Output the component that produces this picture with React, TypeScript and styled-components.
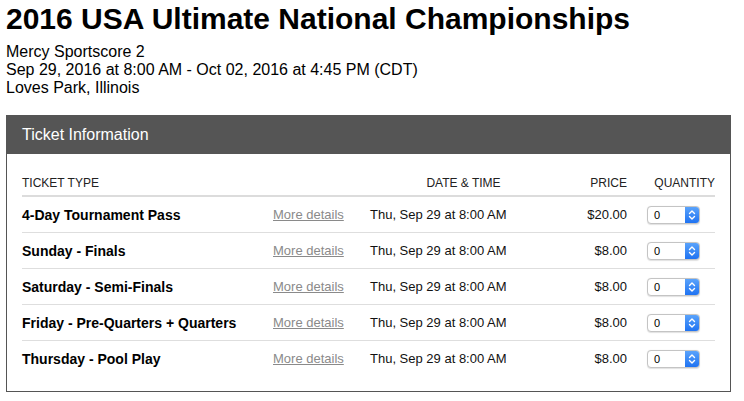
import React from "react";
import styled, { createGlobalStyle } from "styled-components";

const Global = createGlobalStyle`
  html, body { margin: 0; padding: 0; background: #fff; }
  body { font-family: "Liberation Sans", Arial, Helvetica, sans-serif; color: #000; }
`;

const Page = styled.div`
  padding: 0 13px 0 6px;
  width: 744px;
  box-sizing: border-box;
`;

const Title = styled.h1`
  margin: 1px 0 6px;
  font-size: 30px;
  line-height: 36px;
  font-weight: bold;
  color: #000;
  white-space: nowrap;
`;

const Meta = styled.div`
  font-size: 16px;
  line-height: 18px;
  color: #000;
`;

const Panel = styled.section`
  margin-top: 18px;
  border: 1px solid #555;
  width: 725px;
  box-sizing: border-box;
`;

const PanelHeader = styled.div`
  height: 38px;
  line-height: 38px;
  background: #555555;
  color: #fff;
  font-size: 16px;
  padding-left: 15px;
`;

const PanelBody = styled.div`
  padding: 22px 14px 15px 15px;
`;

const Grid = styled.div`
  display: grid;
  grid-template-columns: 251px 97px 187px 70px 88px;
`;

const HeadRow = styled.div`
  display: contents;
`;

const HeadCell = styled.div<{ $align?: "left" | "center" | "right" }>`
  font-size: 12px;
  line-height: 14px;
  color: #222;
  text-transform: uppercase;
  text-align: ${(p) => p.$align || "left"};
  padding-bottom: 5px;
  border-bottom: 2px solid #dcdcdc;
  white-space: nowrap;
`;

const Cell = styled.div<{ $align?: "left" | "center" | "right"; $last?: boolean }>`
  height: 35px;
  display: flex;
  align-items: center;
  justify-content: ${(p) =>
    p.$align === "right" ? "flex-end" : p.$align === "center" ? "center" : "flex-start"};
  border-bottom: ${(p) => (p.$last ? "none" : "1px solid #dedede")};
  font-size: 13px;
  color: #111;
  white-space: nowrap;
`;

const NameCell = styled(Cell)`
  font-size: 14px;
  font-weight: bold;
  color: #000;
`;

const QtyCell = styled(Cell)`
  padding-left: 20px;
`;

const Details = styled.a`
  color: #8a8a8a;
  text-decoration: underline;
  font-size: 13px;
  cursor: pointer;
`;

const Select = styled.div`
  width: 53px;
  height: 18px;
  box-sizing: border-box;
  display: flex;
  border: 1px solid #c4c4c4;
  border-radius: 4px;
  background: #fff;
  overflow: hidden;
  box-shadow: 0 0.5px 1px rgba(0, 0, 0, 0.12);
`;

const SelectValue = styled.span`
  flex: 1;
  font-size: 11px;
  line-height: 16px;
  padding-left: 6px;
  color: #000;
`;

const Stepper = styled.span`
  width: 14px;
  height: 100%;
  background: linear-gradient(#5aa3fb, #1f73f2);
  display: flex;
  align-items: center;
  justify-content: center;
`;

const tickets = [
  { name: "4-Day Tournament Pass", price: "$20.00" },
  { name: "Sunday - Finals", price: "$8.00" },
  { name: "Saturday - Semi-Finals", price: "$8.00" },
  { name: "Friday - Pre-Quarters + Quarters", price: "$8.00" },
  { name: "Thursday - Pool Play", price: "$8.00" },
];

const Chevrons = () => (
  <svg width="8" height="12" viewBox="0 0 8 12">
    <path d="M1.5 4.5 L4 2 L6.5 4.5" fill="none" stroke="#fff" strokeWidth="1.4" strokeLinecap="round" strokeLinejoin="round" />
    <path d="M1.5 7.5 L4 10 L6.5 7.5" fill="none" stroke="#fff" strokeWidth="1.4" strokeLinecap="round" strokeLinejoin="round" />
  </svg>
);

export default function App() {
  return (
    <>
      <Global />
      <Page>
        <Title>2016 USA Ultimate National Championships</Title>
        <Meta>
          <div>Mercy Sportscore 2</div>
          <div>Sep 29, 2016 at 8:00 AM - Oct 02, 2016 at 4:45 PM (CDT)</div>
          <div>Loves Park, Illinois</div>
        </Meta>
        <Panel>
          <PanelHeader>Ticket Information</PanelHeader>
          <PanelBody>
            <Grid>
              <HeadRow>
                <HeadCell>Ticket Type</HeadCell>
                <HeadCell />
                <HeadCell $align="center">Date &amp; Time</HeadCell>
                <HeadCell $align="right">Price</HeadCell>
                <HeadCell $align="right">Quantity</HeadCell>
              </HeadRow>
              {tickets.map((t, i) => {
                const last = i === tickets.length - 1;
                return (
                  <React.Fragment key={t.name}>
                    <NameCell $last={last}>{t.name}</NameCell>
                    <Cell $last={last}>
                      <Details>More details</Details>
                    </Cell>
                    <Cell $last={last}>Thu, Sep 29 at 8:00 AM</Cell>
                    <Cell $last={last} $align="right">{t.price}</Cell>
                    <QtyCell $last={last}>
                      <Select>
                        <SelectValue>0</SelectValue>
                        <Stepper>
                          <Chevrons />
                        </Stepper>
                      </Select>
                    </QtyCell>
                  </React.Fragment>
                );
              })}
            </Grid>
          </PanelBody>
        </Panel>
      </Page>
    </>
  );
}
